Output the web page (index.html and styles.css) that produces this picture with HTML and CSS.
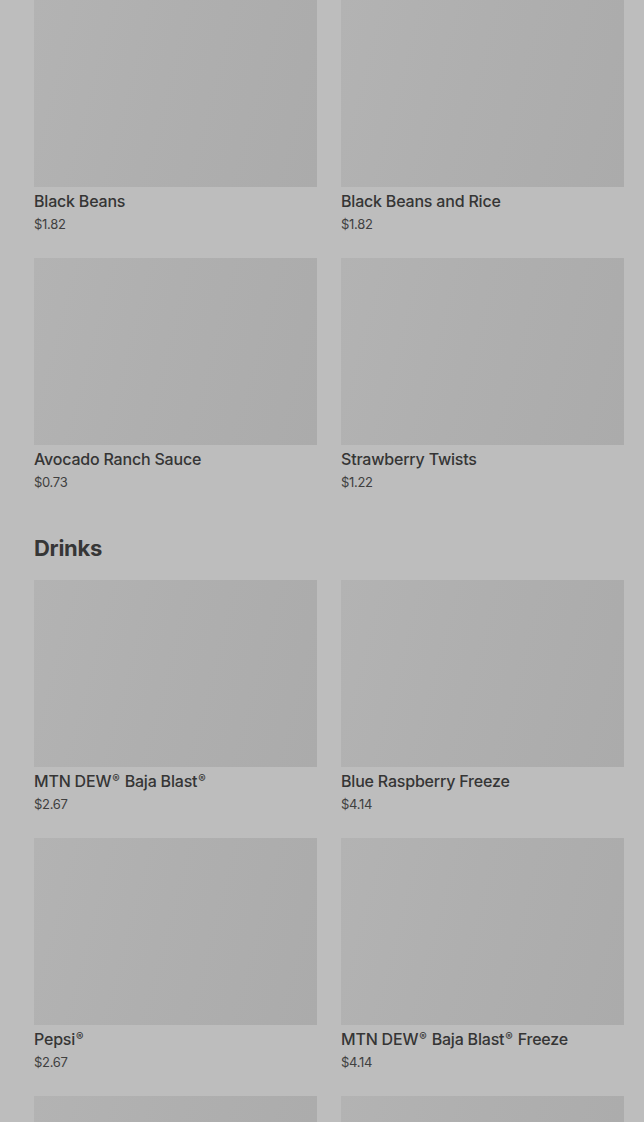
FILE: index.html
```html
<!DOCTYPE html>
<html lang="en">
<head>
    <meta charset="UTF-8">
    <meta name="viewport" content="width=device-width, initial-scale=1.0">
    <title>Menu</title>
    <link rel="stylesheet" href="styles.css">
</head>
<body>
    <div class="menu">
        <div class="item-grid">
            <div class="item">
                <div class="item-image"></div>
                <div class="item-name">Black Beans</div>
                <div class="item-price">$1.82</div>
            </div>
            <div class="item">
                <div class="item-image"></div>
                <div class="item-name">Black Beans and Rice</div>
                <div class="item-price">$1.82</div>
            </div>
            <div class="item">
                <div class="item-image"></div>
                <div class="item-name">Avocado Ranch Sauce</div>
                <div class="item-price">$0.73</div>
            </div>
            <div class="item">
                <div class="item-image"></div>
                <div class="item-name">Strawberry Twists</div>
                <div class="item-price">$1.22</div>
            </div>
        </div>

        <h2 class="section-title">Drinks</h2>
        <div class="item-grid">
            <div class="item">
                <div class="item-image"></div>
                <div class="item-name">MTN DEW<span class="reg">®</span> Baja Blast<span class="reg">®</span></div>
                <div class="item-price">$2.67</div>
            </div>
            <div class="item">
                <div class="item-image"></div>
                <div class="item-name">Blue Raspberry Freeze</div>
                <div class="item-price">$4.14</div>
            </div>
            <div class="item">
                <div class="item-image"></div>
                <div class="item-name">Pepsi<span class="reg">®</span></div>
                <div class="item-price">$2.67</div>
            </div>
            <div class="item">
                <div class="item-image"></div>
                <div class="item-name">MTN DEW<span class="reg">®</span> Baja Blast<span class="reg">®</span> Freeze</div>
                <div class="item-price">$4.14</div>
            </div>
            <!-- next row, still loading -->
            <div class="item">
                <div class="item-image"></div>
            </div>
            <div class="item">
                <div class="item-image"></div>
            </div>
        </div>
    </div>
</body>
</html>
```

FILE: styles.css
```css
body {
    font-family: Inter, "Noto Sans", sans-serif;
    margin: 0;
    padding: 0;
    background-color: #bdbdbd;
    color: #353535;
    overflow: hidden;
}
.menu {
    padding: 0 20px 40px 34px;
}
.item-grid {
    display: grid;
    grid-template-columns: 1fr 1fr;
    gap: 24px;
}
.item-image {
    height: 187px;
    background: linear-gradient(105deg, #b3b3b3 0%, #afafaf 45%, #ababab 100%);
}
.item-name {
    margin-top: 4px;
    font-size: 16px;
    font-weight: 500;
    line-height: 20px;
    letter-spacing: -0.2px;
}
.item-name .reg {
    font-size: 0.7em;
    vertical-align: 0.35em;
    line-height: 0;
    margin: 0 1px;
}
.item-price {
    margin-top: 3px;
    font-size: 13px;
    line-height: 20px;
    color: #404040;
    letter-spacing: -0.3px;
}
.section-title {
    margin: 42px 0 18px;
    font-size: 22px;
    font-weight: 700;
    line-height: 28px;
    letter-spacing: -0.3px;
    color: #363636;
}
```
